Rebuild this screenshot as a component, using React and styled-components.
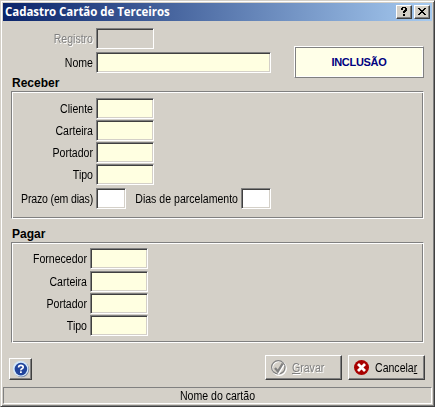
import React from "react";
import styled, { createGlobalStyle, css } from "styled-components";

const receivable = ["Cliente", "Carteira", "Portador", "Tipo"];
const payable = ["Fornecedor", "Carteira", "Portador", "Tipo"];

export default function App() {
  return (
    <>
      <GlobalStyle />
      <Window>
        <TitleBar>
          <Title>Cadastro Cartão de Terceiros</Title>
          <CaptionButton aria-label="Ajuda">
            <QuestionGlyph />
          </CaptionButton>
          <CaptionButton aria-label="Fechar">
            <CloseGlyph />
          </CaptionButton>
        </TitleBar>

        <Header>
          <HeaderFields>
            <Row $gap={3}>
              <Label $width={90} $disabled>
                Registro
              </Label>
              <Field disabled />
            </Row>
            <Row>
              <Label $width={90}>Nome</Label>
              <Field $width={175} $color="#ffffe1" />
            </Row>
          </HeaderFields>
          <Mode>INCLUSÃO</Mode>
        </Header>

        <Heading $top={-2}>Receber</Heading>
        <Group $height={128} $top={6}>
          {receivable.map((name) => (
            <Row key={name} $gap={1}>
              <Label $width={81}>{name}</Label>
              <Field $color="#ffffe1" />
            </Row>
          ))}
          <TermsRow>
            <Label $width={81} $spacing={-0.2}>
              Prazo (em dias)
            </Label>
            <Field $width={30} $color="#fff" />
            <Label $width={112}>Dias de parcelamento</Label>
            <Field $width={30} $color="#fff" />
          </TermsRow>
        </Group>

        <Heading $top={8}>Pagar</Heading>
        <Group $height={101} $top={5}>
          {payable.map((name, i) => (
            <Row key={name} $gap={i === 0 ? 2 : 1}>
              <Label $width={75}>{name}</Label>
              <Field $color="#ffffe1" />
            </Row>
          ))}
        </Group>

        <Footer>
          <HelpButton aria-label="Ajuda">
            <HelpIcon />
          </HelpButton>
          <ActionButton disabled>
            <CheckIcon />
            <Caption>
              <u>G</u>ravar
            </Caption>
          </ActionButton>
          <ActionButton>
            <CancelIcon />
            <Caption>
              Cancela<u>r</u>
            </Caption>
          </ActionButton>
        </Footer>

        <StatusBar>
          <StatusText>Nome do cartão</StatusText>
        </StatusBar>
      </Window>
    </>
  );
}

function QuestionGlyph() {
  return (
    <svg width="6" height="9" shapeRendering="crispEdges">
      <path d="M1 0h4v1h1v3h-1v1h-1v1h-2v-2h1v-1h1v-2h-2v2h-2v-2h1zM2 7h2v2h-2z" />
    </svg>
  );
}

function CloseGlyph() {
  return (
    <svg width="8" height="7" shapeRendering="crispEdges">
      <path d="M0 0h2v1h1v1h2v-1h1v-1h2v1h-1v1h-1v1h-1v1h1v1h1v1h1v1h-2v-1h-1v-1h-2v1h-1v1h-2v-1h1v-1h1v-1h1v-1h-1v-1h-1v-1h-1z" />
    </svg>
  );
}

function HelpIcon() {
  return (
    <svg width="18" height="18" viewBox="0 0 18 18">
      <circle cx="9.6" cy="9.6" r="7.6" fill="#7888a8" />
      <circle cx="8.7" cy="8.8" r="7.8" fill="#d3e8fb" />
      <circle cx="8.9" cy="9.1" r="6.3" fill="#21449b" />
      <path d="M6.6 7.4q0-2.1 2.3-2.1t2.3 1.9q0 1-1.2 1.6t-1.1 1.5" fill="none" stroke="#fff" strokeWidth="1.7" />
      <rect x="8" y="11.3" width="1.8" height="1.7" fill="#fff" />
    </svg>
  );
}

function CheckIcon() {
  return (
    <svg width="16" height="16" viewBox="0 0 16 16" fill="none">
      <circle cx="8.3" cy="8.3" r="7" stroke="#fff" strokeWidth="1.3" />
      <circle cx="7.3" cy="7.3" r="6.7" stroke="#808080" strokeWidth="1.2" />
      <path d="M5 9.4l2.7 3.7 5-8.3" stroke="#fff" strokeWidth="2" />
      <path d="M4 8l2.8 3.5 4.9-8" stroke="#808080" strokeWidth="2.3" />
    </svg>
  );
}

function CancelIcon() {
  return (
    <svg width="16" height="16" viewBox="0 0 16 16">
      <circle cx="7.5" cy="7.5" r="7.5" fill="#a80000" />
      <path d="M4 4l7 7M11 4l-7 7" stroke="#fff" strokeWidth="2.8" />
    </svg>
  );
}

const GlobalStyle = createGlobalStyle`
  * {
    box-sizing: border-box;
  }

  body {
    margin: 0;
    background: #d4d0c8;
    font: 12px/14px "Liberation Sans", Arial, sans-serif;
    color: #000;
  }
`;

const raised = css`
  border: 1px solid;
  border-color: #fff #404040 #404040 #fff;
  box-shadow: inset -1px -1px #808080;
`;

// the dialog face is a condensed sans
const condensed = css`
  transform: scaleX(0.88);
`;

const Window = styled.div`
  display: flex;
  flex-direction: column;
  width: 435px;
  height: 407px;
  padding: 2px;
  background: #d4d0c8;
  border: 1px solid;
  border-color: #d4d0c8 #404040 #404040 #d4d0c8;
  box-shadow: inset 1px 1px #fff, inset -1px -1px #808080;
`;

const TitleBar = styled.div`
  display: flex;
  align-items: center;
  gap: 2px;
  height: 18px;
  flex: none;
  padding: 0 2px;
  background: linear-gradient(90deg, #0a246a, #a6caf0);
`;

const Title = styled.div`
  flex: 1;
  color: #fff;
  font: bold 11.5px/16px "Open Sans", sans-serif;
  letter-spacing: -0.05px;
`;

const CaptionButton = styled.button`
  ${raised}
  display: flex;
  align-items: center;
  justify-content: center;
  width: 16px;
  height: 14px;
  padding: 0 1px 1px 0;
  background: #d4d0c8;
`;

const Header = styled.div`
  display: flex;
  justify-content: space-between;
  padding: 7px 8px 0 0;
`;

const HeaderFields = styled.div`
  display: flex;
  flex-direction: column;
`;

const Row = styled.div`
  display: flex;
  align-items: center;
  margin-bottom: ${({ $gap = 0 }) => $gap}px;
`;

const TermsRow = styled(Row)`
  margin-top: 3px;
`;

const Label = styled.label`
  ${condensed}
  transform-origin: right;
  display: flex;
  justify-content: flex-end;
  width: ${({ $width }) => $width}px;
  margin-right: 3px;
  white-space: nowrap;
  letter-spacing: ${({ $spacing = 0 }) => $spacing}px;
  ${({ $disabled }) => $disabled && "color: #808080; text-shadow: 1px 1px #fff;"}
`;

const Field = styled.input`
  width: ${({ $width = 58 }) => $width}px;
  height: 21px;
  padding: 0 2px;
  background: ${({ $color = "#d4d0c8" }) => $color};
  border: 1px solid;
  border-color: #808080 #fff #fff #808080;
  border-radius: 0;
  box-shadow: inset 1px 1px #404040, inset -1px -1px #d4d0c8;
  outline: none;
`;

const Mode = styled.div`
  width: 130px;
  height: 32px;
  margin-top: 18px;
  border: 1px solid;
  border-color: #fff #808080 #808080 #fff;
  box-shadow: inset 1px 1px #808080, inset -1px -1px #fff;
  background: #ffffe8;
  color: #000080;
  font: bold 11px/31px "Liberation Sans", Arial, sans-serif;
  letter-spacing: -0.3px;
  text-align: center;
`;

const Heading = styled.h2`
  height: 13px;
  flex: none;
  margin: ${({ $top }) => $top}px 0 0 9px;
  font: bold 12px/15px "Liberation Sans", Arial, sans-serif;
`;

const Group = styled.fieldset`
  width: 413px;
  height: ${({ $height }) => $height}px;
  flex: none;
  min-width: 0;
  margin: 2px 0 0 8px;
  padding: ${({ $top }) => $top}px 0 0;
  border: 1px solid;
  border-color: #808080 #fff #fff #808080;
  box-shadow: inset 1px 1px #fff, inset -1px -1px #808080;
`;

const Footer = styled.div`
  display: flex;
  align-items: flex-end;
  gap: 6px;
  height: 37px;
  padding: 0 7px 0 6px;
`;

const HelpButton = styled.button`
  ${raised}
  display: flex;
  align-items: center;
  justify-content: center;
  width: 23px;
  height: 22px;
  margin-right: auto;
  padding: 0;
  background: #d4d0c8;
`;

const ActionButton = styled.button`
  ${raised}
  display: flex;
  align-items: center;
  gap: 5px;
  width: 77px;
  height: 25px;
  padding: 0 0 0 5px;
  background: #d4d0c8;
  color: #000;
  font: inherit;

  &:disabled {
    color: #808080;
    text-shadow: 1px 1px #fff;
  }
`;

const Caption = styled.span`
  ${condensed}
  transform-origin: left;
`;

const StatusBar = styled.div`
  height: 17px;
  margin-top: auto;
  border: 1px solid;
  border-color: #808080 #fff #fff #808080;
  line-height: 16px;
  text-align: center;
`;

const StatusText = styled.div`
  ${condensed}
`;
